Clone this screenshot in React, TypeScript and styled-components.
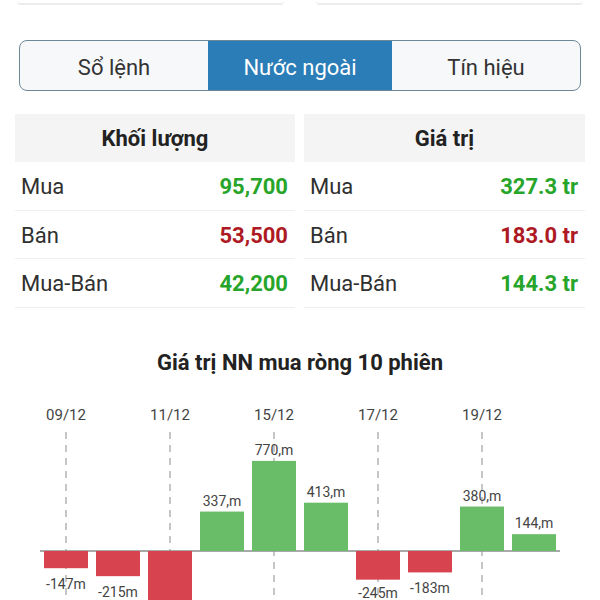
import { createGlobalStyle, styled } from "styled-components";

const GlobalStyle = createGlobalStyle`
  body {
    margin: 0;
    background: #ffffff;
    font-family: Roboto, "Noto Sans", "Liberation Sans", sans-serif;
    color: #2b2b2b;
  }
`;

const Page = styled.div`
  width: 600px;
  height: 600px;
  overflow: hidden;
  background: #ffffff;
`;

const TopCards = styled.div`
  display: flex;
  gap: 32px;
  padding: 0 17px;
`;

const TopCard = styled.div`
  flex: 1;
  height: 3px;
  border-bottom: 2px solid #ececec;
  border-radius: 0 0 4px 4px;
`;

const TabBar = styled.div`
  margin: 35px 19px 0;
  height: 49px;
  display: grid;
  grid-template-columns: 188px 184px 1fr;
  border: 1.5px solid #6d8798;
  border-radius: 8px;
  overflow: hidden;
  background: #f6f8fa;
`;

const Tab = styled.div<{ $active?: boolean }>`
  display: flex;
  align-items: center;
  justify-content: center;
  padding-top: 3px;
  font-size: 22px;
  color: ${(p) => (p.$active ? "#ffffff" : "#333333")};
  background: ${(p) => (p.$active ? "#2b7db7" : "transparent")};
`;

const Tables = styled.div`
  display: grid;
  grid-template-columns: 280px 281px;
  gap: 9px;
  padding: 0 15px;
  margin-top: 23px;
`;

const Table = styled.div`
  display: flex;
  flex-direction: column;
`;

const Head = styled.div`
  height: 48px;
  background: #f4f4f4;
  display: flex;
  align-items: center;
  justify-content: center;
  font-size: 22px;
  font-weight: 700;
  color: #222222;
`;

const Row = styled.div`
  height: 48.5px;
  display: flex;
  align-items: center;
  justify-content: space-between;
  padding: 2px 7px 0 6px;
  border-bottom: 1px solid #eeeeee;
  box-sizing: border-box;
`;

const Label = styled.span`
  font-size: 22px;
  color: #303030;
`;

const Value = styled.span<{ $tone: "up" | "down" }>`
  font-size: 22px;
  font-weight: 700;
  color: ${(p) => (p.$tone === "up" ? "#27a52a" : "#ae1a24")};
`;

const ChartTitle = styled.div`
  margin: 41px 0 13px;
  height: 28px;
  line-height: 28px;
  text-align: center;
  font-size: 22px;
  font-weight: 700;
  color: #222222;
`;

const ChartSvg = styled.svg`
  display: block;
  font-family: Roboto, "Noto Sans", "Liberation Sans", sans-serif;
`;

type Stat = { label: string; value: string; tone: "up" | "down" };

const volume: Stat[] = [
  { label: "Mua", value: "95,700", tone: "up" },
  { label: "Bán", value: "53,500", tone: "down" },
  { label: "Mua-Bán", value: "42,200", tone: "up" },
];

const worth: Stat[] = [
  { label: "Mua", value: "327.3 tr", tone: "up" },
  { label: "Bán", value: "183.0 tr", tone: "down" },
  { label: "Mua-Bán", value: "144.3 tr", tone: "up" },
];

const sessions = [
  { date: "09/12", v: -147, text: "-147m" },
  { date: "10/12", v: -215, text: "-215m" },
  { date: "11/12", v: -540, text: "-540m" },
  { date: "12/12", v: 337, text: "337,m" },
  { date: "15/12", v: 770, text: "770,m" },
  { date: "16/12", v: 413, text: "413,m" },
  { date: "17/12", v: -245, text: "-245m" },
  { date: "18/12", v: -183, text: "-183m" },
  { date: "19/12", v: 380, text: "380,m" },
  { date: "22/12", v: 144, text: "144,m" },
];

const CHART_H = 212;

function StatTable({ title, rows }: { title: string; rows: Stat[] }) {
  return (
    <Table>
      <Head>{title}</Head>
      {rows.map((r) => (
        <Row key={r.label}>
          <Label>{r.label}</Label>
          <Value $tone={r.tone}>{r.value}</Value>
        </Row>
      ))}
    </Table>
  );
}

function NetChart() {
  const left = 40;
  const slot = 52;
  const barW = 44;
  const base = 161;
  const k = 0.117;
  return (
    <ChartSvg width={600} height={CHART_H} viewBox={`0 0 600 ${CHART_H}`}>
      {sessions.map((s, i) =>
        i % 2 === 0 ? (
          <g key={s.date}>
            <text x={left + slot * i + slot / 2} y={30} fontSize={15} fill="#444" textAnchor="middle">
              {s.date}
            </text>
            <line
              x1={left + slot * i + slot / 2}
              x2={left + slot * i + slot / 2}
              y1={42}
              y2={CHART_H}
              stroke="#a0a0a0"
              strokeWidth={1.2}
              strokeDasharray="7 6"
            />
          </g>
        ) : null
      )}
      <line x1={left} x2={left + slot * 10} y1={base} y2={base} stroke="#8c8c8c" strokeWidth={1.5} />
      {sessions.map((s, i) => {
        const h = Math.abs(s.v) * k;
        const x = left + slot * i + (slot - barW) / 2;
        const cx = x + barW / 2;
        const up = s.v > 0;
        const raw = up ? base - h - 6 : base + h + 21;
        const ty = Math.min(raw, CHART_H - 4);
        return (
          <g key={s.date + "b"}>
            <rect x={x} y={up ? base - h : base} width={barW} height={h} fill={up ? "#6abd68" : "#d7444f"} />
            {raw - 10 < CHART_H && ty - 11 > base + h - 1 || up ? (
              <text x={cx} y={ty} fontSize={14} fill="#444" textAnchor="middle">
                {s.text}
              </text>
            ) : null}
          </g>
        );
      })}
    </ChartSvg>
  );
}

export default function App() {
  return (
    <Page>
      <GlobalStyle />
      <TopCards>
        <TopCard />
        <TopCard />
      </TopCards>
      <TabBar>
        <Tab>Sổ lệnh</Tab>
        <Tab $active>Nước ngoài</Tab>
        <Tab>Tín hiệu</Tab>
      </TabBar>
      <Tables>
        <StatTable title="Khối lượng" rows={volume} />
        <StatTable title="Giá trị" rows={worth} />
      </Tables>
      <ChartTitle>Giá trị NN mua ròng 10 phiên</ChartTitle>
      <NetChart />
    </Page>
  );
}
